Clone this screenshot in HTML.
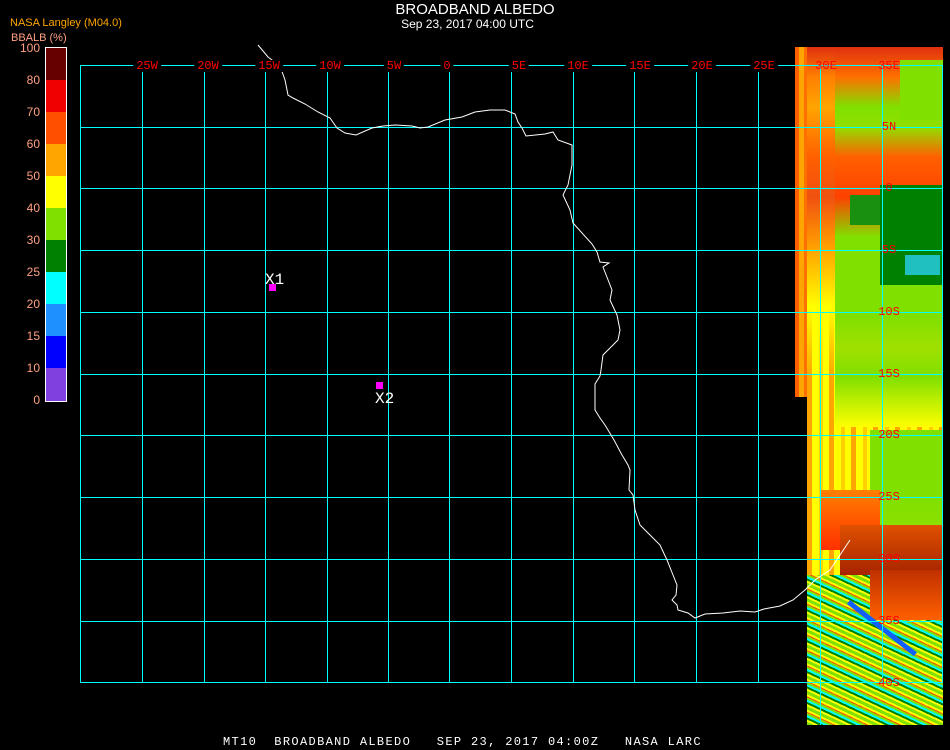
<!DOCTYPE html>
<html><head><meta charset="utf-8"><style>
body{margin:0;background:#000;width:950px;height:750px;overflow:hidden;position:relative;font-family:"Liberation Sans",sans-serif}
.a{position:absolute}
.lbl{position:absolute;color:#ffa080;font-size:12px;text-align:right;width:40px;left:0}
.gl{position:absolute;color:#f00;font-family:"Liberation Mono",monospace;font-size:12px;background:#000;padding:0 3px;transform:translate(-50%,-50%);line-height:12px}
.glt{position:absolute;color:#f00;font-family:"Liberation Mono",monospace;font-size:12px;transform:translate(-50%,-50%);line-height:12px}
</style></head><body>
<div class="a" style="left:0;top:0;width:950px;text-align:center;color:#fff;font-size:15px;line-height:18px;top:1px">BROADBAND ALBEDO</div>
<div class="a" style="left:0;top:17px;width:935px;text-align:center;color:#fff;font-size:12px">Sep 23, 2017 04:00 UTC</div>
<div class="a" style="left:10px;top:17px;color:#ffa500;font-size:11px">NASA Langley (M04.0)</div>
<div class="a" style="left:11px;top:32px;color:#ffa080;font-size:11px">BBALB (%)</div>
<div class="a" style="left:45px;top:47px;width:20px;height:353px;border:1px solid #fff;background:linear-gradient(#660000 0 32px,#f00000 32px 64px,#ff5000 64px 96px,#ffa500 96px 128px,#ffff00 128px 160px,#80e000 160px 192px,#008000 192px 224px,#00ffff 224px 256px,#1e90ff 256px 288px,#0000ff 288px 320px,#8040e0 320px)"></div>
<div class="lbl" style="top:41px">100</div><div class="lbl" style="top:73px">80</div><div class="lbl" style="top:105px">70</div><div class="lbl" style="top:137px">60</div><div class="lbl" style="top:169px">50</div><div class="lbl" style="top:201px">40</div><div class="lbl" style="top:233px">30</div><div class="lbl" style="top:265px">25</div><div class="lbl" style="top:297px">20</div><div class="lbl" style="top:329px">15</div><div class="lbl" style="top:361px">10</div><div class="lbl" style="top:393px">0</div>

<!-- satellite strip -->
<div class="a" style="left:795px;top:47px;width:14px;height:350px;background:repeating-linear-gradient(90deg,#ff6000 0 4px,#ffa500 4px 9px,#ff7000 9px 14px)"></div>
<div class="a" style="left:807px;top:47px;width:136px;height:678px;background:repeating-linear-gradient(90deg,#ffa500 0 5px,#ffff00 5px 12px,#ffd000 12px 16px,#ffff00 16px 22px)"></div>
<div class="a" style="left:807px;top:47px;width:136px;height:370px;background:linear-gradient(#e03010 0,#ff8000 30px,#ffa500 60px,#ff6000 110px,#f05010 150px,#ffa000 200px,#ffff00 260px,transparent 330px)"></div>
<div class="a" style="left:835px;top:47px;width:108px;height:380px;background:linear-gradient(#e03010 0,#ff7000 30px,#80e000 60px,#90e000 80px,#ff6000 110px,#ff4000 150px,#80e000 190px,#80e000 270px,#a0e000 300px,#80e000 330px,#ffff00 380px)"></div>
<div class="a" style="left:900px;top:60px;width:43px;height:60px;background:#80e000"></div>
<div class="a" style="left:880px;top:185px;width:63px;height:100px;background:#008000"></div>
<div class="a" style="left:850px;top:195px;width:30px;height:30px;background:#1a9010"></div>
<div class="a" style="left:905px;top:255px;width:35px;height:20px;background:#20c0c0"></div>
<div class="a" style="left:870px;top:430px;width:73px;height:110px;background:linear-gradient(#80e000,#80e000 60%,#90e000)"></div>
<div class="a" style="left:820px;top:490px;width:60px;height:60px;background:linear-gradient(#ff8000,#ff3000)"></div>
<div class="a" style="left:840px;top:525px;width:103px;height:55px;background:linear-gradient(#e05000,#a02000)"></div>
<div class="a" style="left:807px;top:575px;width:136px;height:150px;background:repeating-linear-gradient(25deg,#80e000 0 3px,#ffff00 3px 5px,#008000 5px 7px,#00ffff 7px 9px,#80e000 9px 11px,#ff5000 11px 12px,#ffff00 12px 14px)"></div>
<div class="a" style="left:870px;top:570px;width:73px;height:50px;background:linear-gradient(#c03000,#ff6000)"></div>
<div class="a" style="left:850px;top:600px;width:85px;height:5px;background:#1060ff;transform:rotate(38deg);transform-origin:0 0"></div>

<svg class="a" style="left:0;top:0" width="950" height="750" shape-rendering="crispEdges">
<g stroke="#00ffff" stroke-width="1" fill="none">
<rect x="80.5" y="65.5" width="862" height="617"/>
<path d="M142.5 65V683M204.5 65V683M265.5 65V683M327.5 65V683M388.5 65V683M449.5 65V683M511.5 65V683M573.5 65V683M634.5 65V683M696.5 65V683M758.5 65V683M820.5 65V725M882.5 65V683"/>
<path d="M80 127.5H943M80 188.5H943M80 250.5H943M80 312.5H943M80 374.5H943M80 435.5H943M80 497.5H943M80 559.5H943M80 621.5H943"/>
</g>
<polyline fill="none" stroke="#fff" stroke-width="1" shape-rendering="auto" points="258,45 268,57 280,66 285,80 288,95 293,98 305,104 318,112 330,118 337,128 345,133 356,135 372,128 383,126 395,125 412,126 420,128 428,127 445,120 462,117 475,112 490,110 505,110 515,114 518,122 522,128 526,136 545,134 553,132 558,140 572,145 572,165 568,185 563,195 570,210 573,223 592,244 597,252 600,262 609,263 603,267 612,290 610,300 617,315 620,330 618,340 610,348 603,355 601,370 600,376 595,384 595,410 600,418 605,425 614,440 622,455 628,465 630,470 629,490 633,495 635,510 640,525 650,535 660,545 667,560 673,575 677,585 676,595 672,600 677,605 678,610 688,613 695,618 705,614 723,613 740,611 755,612 764,609 780,606 793,600 805,590 815,580 830,570 840,555 850,540"/>
<rect x="269" y="284" width="7" height="7" fill="#ff00ff"/>
<rect x="376" y="382" width="7" height="7" fill="#ff00ff"/>
<text x="265" y="284" fill="#fff" font-family="Liberation Mono,monospace" font-size="16">X1</text>
<text x="375" y="403" fill="#fff" font-family="Liberation Mono,monospace" font-size="16">X2</text>
</svg>
<div class="gl" style="left:147px;top:66px">25W</div>
<div class="gl" style="left:208px;top:66px">20W</div>
<div class="gl" style="left:269px;top:66px">15W</div>
<div class="gl" style="left:330px;top:66px">10W</div>
<div class="gl" style="left:394px;top:66px">5W</div>
<div class="gl" style="left:447px;top:66px">0</div>
<div class="gl" style="left:519px;top:66px">5E</div>
<div class="gl" style="left:578px;top:66px">10E</div>
<div class="gl" style="left:640px;top:66px">15E</div>
<div class="gl" style="left:702px;top:66px">20E</div>
<div class="gl" style="left:764px;top:66px">25E</div>
<div class="glt" style="left:826px;top:66px">30E</div>
<div class="glt" style="left:889px;top:66px">35E</div>
<div class="glt" style="left:889px;top:127px">5N</div>
<div class="glt" style="left:889px;top:188px">0</div>
<div class="glt" style="left:889px;top:250px">5S</div>
<div class="glt" style="left:889px;top:312px">10S</div>
<div class="glt" style="left:889px;top:374px">15S</div>
<div class="glt" style="left:889px;top:435px">20S</div>
<div class="glt" style="left:889px;top:497px">25S</div>
<div class="glt" style="left:889px;top:559px">30S</div>
<div class="glt" style="left:889px;top:621px">35S</div>
<div class="glt" style="left:889px;top:683px">40S</div>
<div class="a" style="left:223px;top:735px;color:#fff;font-family:'Liberation Mono',monospace;font-size:12px;letter-spacing:1.35px;white-space:pre;line-height:14px">MT10  BROADBAND ALBEDO   SEP 23, 2017 04:00Z   NASA LARC</div>
</body></html>
